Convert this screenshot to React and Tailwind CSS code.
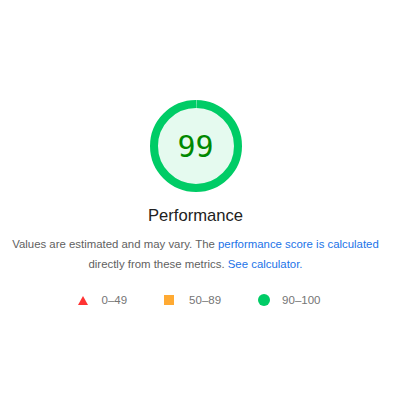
import React from 'react';

const SCORE = 99;
const R = 42;
const CIRC = 2 * Math.PI * R;

function Gauge({ score }) {
  const gap = score === 100 ? 0 : 0.8;
  return (
    <div className="relative h-[92px] w-[92px]">
      <svg viewBox="0 0 92 92" className="h-full w-full -rotate-90">
        <circle cx="46" cy="46" r={R} fill="#e5faef" stroke="none" />
        <circle
          cx="46"
          cy="46"
          r={R}
          fill="none"
          stroke="#00cc66"
          strokeWidth="8"
          strokeDasharray={`${CIRC - gap} ${CIRC}`}
          strokeDashoffset={-gap / 2}
        />
      </svg>
      <div className="absolute inset-0 flex items-center justify-center font-['DejaVu_Sans_Mono',monospace] text-[30px] text-[#008800]">
        {score}
      </div>
    </div>
  );
}

export default function App() {
  return (
    <div className="flex h-[410px] w-[391px] flex-col items-center bg-white pt-[100px] font-['Liberation_Sans',Arial,sans-serif]">
      <Gauge score={SCORE} />
      <h2 className="mt-[12px] text-[16.6px] leading-[24px] text-[#212121]">Performance</h2>
      <p className="mt-[6px] text-center text-[11.4px] leading-[20px] text-[#616161]">
        Values are estimated and may vary. The{' '}
        <a href="#" className="text-[#1a73e8]">performance score is calculated</a>
        <br />
        directly from these metrics.{' '}
        <a href="#" className="text-[#1a73e8]">See calculator.</a>
      </p>
      <div className="mt-[18px] flex items-center pl-[7px] text-[11.5px] leading-[16px] text-[#757575]">
        <div className="flex items-center">
          <span className="h-0 w-0 border-x-[5.5px] border-b-[9px] border-x-transparent border-b-[#ff3333]" />
          <span className="ml-[14px]">0–49</span>
        </div>
        <div className="ml-[37px] flex items-center">
          <span className="h-[10px] w-[10px] bg-[#ffaa33]" />
          <span className="ml-[15px]">50–89</span>
        </div>
        <div className="ml-[37px] flex items-center">
          <span className="h-[12px] w-[12px] rounded-full bg-[#00cc66]" />
          <span className="ml-[12px]">90–100</span>
        </div>
      </div>
    </div>
  );
}
